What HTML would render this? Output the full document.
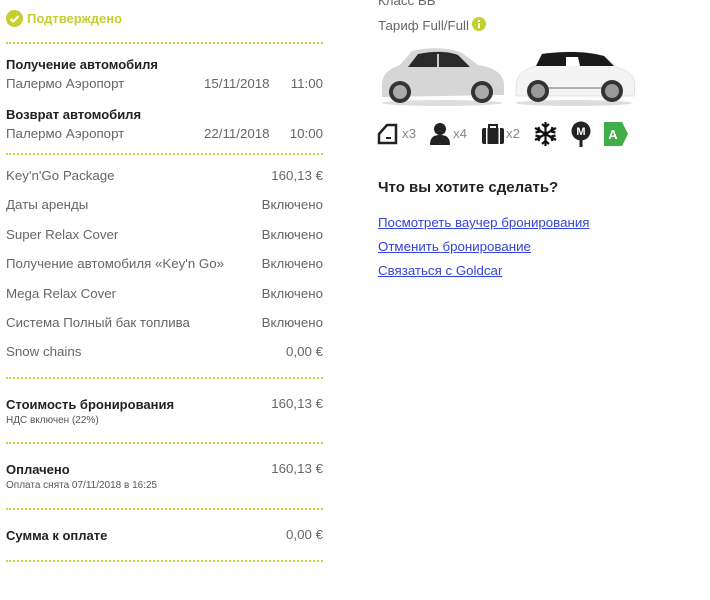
<!DOCTYPE html>
<html><head><meta charset="utf-8"><style>
*{margin:0;padding:0;box-sizing:border-box}
body{width:710px;height:600px;background:#fff;font-family:"Liberation Sans",Arial,sans-serif;position:relative;overflow:hidden;color:#666;font-size:13.3px}
.a{position:absolute;white-space:nowrap}
.b{color:#222;font-weight:bold;font-size:13px}
.r{text-align:right;right:387px}
.dot{position:absolute;left:6px;width:317px;height:0;border-top:2px dotted #cdd53a}
.s{font-size:10px;color:#555}
a{color:#3344dd;text-decoration:underline}
</style></head><body>
<svg class="a" style="left:6px;top:10px" width="17" height="17" viewBox="0 0 17 17"><circle cx="8.5" cy="8.5" r="8.5" fill="#c5cf30"/><path d="M4.5 8.8l2.8 2.7 5.2-5.3" stroke="#fff" stroke-width="2.2" fill="none"/></svg>
<div class="a" style="left:27px;top:11px;color:#c5cf30;font-weight:bold;font-size:13px">Подтверждено</div>
<div class="dot" style="top:42px"></div>

<div class="a b" style="left:6px;top:57px">Получение автомобиля</div>
<div class="a" style="left:6px;top:76px">Палермо Аэропорт</div>
<div class="a" style="left:204px;top:76px">15/11/2018</div>
<div class="a r" style="top:76px">11:00</div>
<div class="a b" style="left:6px;top:107px">Возврат автомобиля</div>
<div class="a" style="left:6px;top:126px">Палермо Аэропорт</div>
<div class="a" style="left:204px;top:126px">22/11/2018</div>
<div class="a r" style="top:126px">10:00</div>
<div class="dot" style="top:153px"></div>

<div class="a" style="left:6px;top:168px">Key'n'Go Package</div><div class="a r" style="top:168px">160,13 €</div>
<div class="a" style="left:6px;top:197px">Даты аренды</div><div class="a r" style="top:197px">Включено</div>
<div class="a" style="left:6px;top:227px">Super Relax Cover</div><div class="a r" style="top:227px">Включено</div>
<div class="a" style="left:6px;top:256px">Получение автомобиля «Key'n Go»</div><div class="a r" style="top:256px">Включено</div>
<div class="a" style="left:6px;top:286px">Mega Relax Cover</div><div class="a r" style="top:286px">Включено</div>
<div class="a" style="left:6px;top:315px">Система Полный бак топлива</div><div class="a r" style="top:315px">Включено</div>
<div class="a" style="left:6px;top:344px">Snow chains</div><div class="a r" style="top:344px">0,00 €</div>
<div class="dot" style="top:377px"></div>

<div class="a b" style="left:6px;top:397px">Стоимость бронирования</div><div class="a r" style="top:396px">160,13 €</div>
<div class="a s" style="left:6px;top:415px">НДС включен (22%)</div>
<div class="dot" style="top:442px"></div>
<div class="a b" style="left:6px;top:462px">Оплачено</div><div class="a r" style="top:461px">160,13 €</div>
<div class="a s" style="left:6px;top:480px">Оплата снята 07/11/2018 в 16:25</div>
<div class="dot" style="top:508px"></div>
<div class="a b" style="left:6px;top:528px">Сумма к оплате</div><div class="a r" style="top:527px">0,00 €</div>
<div class="dot" style="top:560px"></div>

<div class="a" style="left:378px;top:-7px">Класс BB</div>
<div class="a" style="left:378px;top:18px">Тариф Full/Full</div>
<svg class="a" style="left:472px;top:17px" width="14" height="14" viewBox="0 0 14 14"><circle cx="7" cy="7" r="7" fill="#c5cf30"/><rect x="6" y="6" width="2" height="5" fill="#fff"/><rect x="6" y="3" width="2" height="2" fill="#fff"/></svg>

<svg class="a" style="left:378px;top:45px" width="128" height="62" viewBox="0 0 128 62">
<ellipse cx="64" cy="58" rx="60" ry="3" fill="#ddd"/>
<path d="M4 44 C3 30 10 24 22 20 L34 6 C50 2 70 2 84 8 L100 20 C114 22 126 28 126 40 L126 50 L4 52Z" fill="#d6d6d6"/>
<path d="M30 22 L40 9 C55 6 70 6 80 10 L92 22Z" fill="#2a2a2a"/>
<path d="M60 9 L60 22" stroke="#ccc" stroke-width="2"/>
<circle cx="22" cy="47" r="11" fill="#333"/><circle cx="22" cy="47" r="7" fill="#aaa"/>
<circle cx="104" cy="47" r="11" fill="#333"/><circle cx="104" cy="47" r="7" fill="#aaa"/>
</svg>
<svg class="a" style="left:514px;top:48px" width="122" height="58" viewBox="0 0 122 58">
<ellipse cx="60" cy="55" rx="58" ry="3" fill="#ddd"/>
<path d="M2 40 C2 26 10 22 22 18 L28 6 C50 3 72 3 90 8 L104 20 C114 22 121 28 121 38 L120 48 L2 48Z" fill="#f4f4f4" stroke="#ccc" stroke-width="0.5"/>
<path d="M22 18 L28 6 C50 3 72 3 90 8 L100 18Z" fill="#1a1a1a"/>
<path d="M52 9 L64 9 L66 18 L52 18Z" fill="#fff"/>
<path d="M30 40 L100 40" stroke="#999" stroke-width="1.5"/>
<circle cx="24" cy="43" r="11" fill="#333"/><circle cx="24" cy="43" r="7" fill="#999"/>
<circle cx="98" cy="43" r="11" fill="#333"/><circle cx="98" cy="43" r="7" fill="#999"/>
</svg>

<svg class="a" style="left:377px;top:122px" width="22" height="24" viewBox="0 0 22 24"><path d="M2 12 L10 3 L19 3 L19 21 L2 21Z" fill="none" stroke="#222" stroke-width="2.5"/><path d="M4 12 L11 5 L17 5 L17 12Z" fill="#fff"/><rect x="9" y="15" width="5" height="2" fill="#222"/></svg>
<div class="a" style="left:402px;top:126px;color:#888">x3</div>
<svg class="a" style="left:429px;top:122px" width="22" height="24" viewBox="0 0 22 24"><circle cx="11" cy="7" r="6" fill="#222"/><path d="M1 23 C1 15 5 13 11 13 C17 13 21 15 21 23Z" fill="#222"/></svg>
<div class="a" style="left:453px;top:126px;color:#888">x4</div>
<svg class="a" style="left:481px;top:122px" width="24" height="24" viewBox="0 0 24 24"><path d="M8 6 V3 H16 V6" fill="none" stroke="#222" stroke-width="2"/><rect x="1" y="6" width="22" height="16" rx="2" fill="#222"/><rect x="5" y="6" width="1.5" height="16" fill="#fff"/><rect x="17.5" y="6" width="1.5" height="16" fill="#fff"/></svg>
<div class="a" style="left:506px;top:126px;color:#888">x2</div>
<svg class="a" style="left:533px;top:121px" width="25" height="26" viewBox="0 0 25 26" stroke="#111" stroke-width="2.2" fill="none"><path d="M12.5 1V25M2 7L23 19M2 19L23 7"/><path d="M9 3l3.5 3 3.5-3M9 23l3.5-3 3.5 3M2.5 11.5l4.5-1-1.5-4.5M22.5 14.5l-4.5 1 1.5 4.5M2.5 14.5l4.5 1-1.5 4.5M22.5 11.5l-4.5-1 1.5-4.5"/></svg>
<svg class="a" style="left:571px;top:121px" width="20" height="26" viewBox="0 0 20 26"><circle cx="10" cy="10" r="9.5" fill="#222"/><rect x="8.5" y="18" width="3" height="8" fill="#222"/><text x="10" y="14" font-size="11" font-weight="bold" fill="#fff" text-anchor="middle" font-family="Liberation Sans,sans-serif">M</text></svg>
<svg class="a" style="left:604px;top:122px" width="24" height="24" viewBox="0 0 24 24"><path d="M0 0H18L24 12L18 24H0Z" fill="#3fae49"/><text x="9" y="17" font-size="13" font-weight="bold" fill="#fff" text-anchor="middle" font-family="Liberation Sans,sans-serif">A</text></svg>

<div class="a" style="left:378px;top:179px;color:#222;font-weight:bold;font-size:15px">Что вы хотите сделать?</div>
<a class="a" style="left:378px;top:215px">Посмотреть ваучер бронирования</a>
<a class="a" style="left:378px;top:239px">Отменить бронирование</a>
<a class="a" style="left:378px;top:263px">Связаться с Goldcar</a>
</body></html>
